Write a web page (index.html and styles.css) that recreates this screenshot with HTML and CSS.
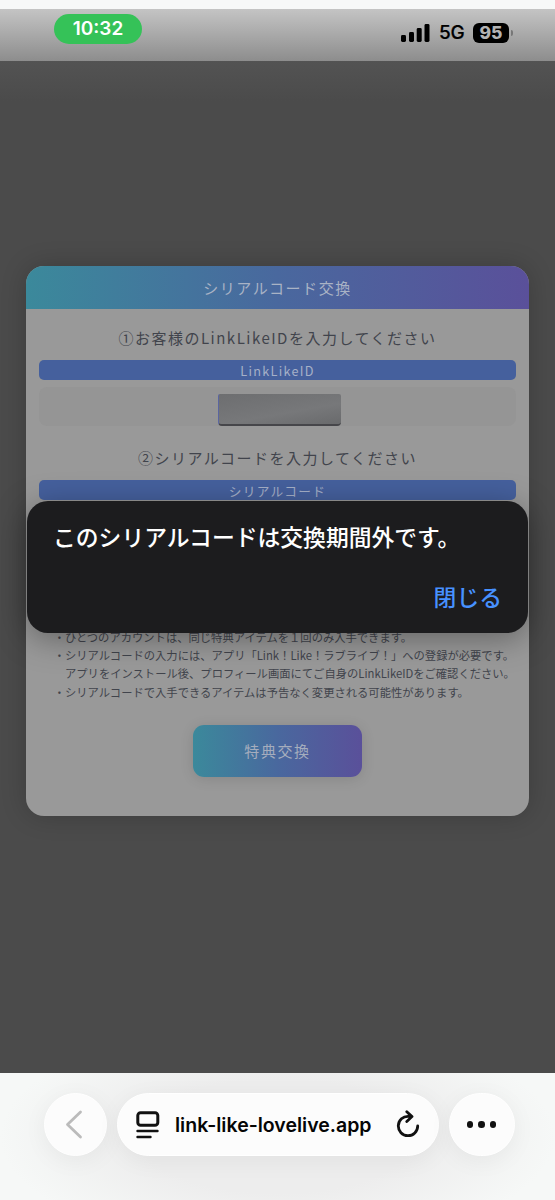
FILE: index.html
```html
<!DOCTYPE html>
<html lang="ja">
<head>
<meta charset="utf-8">
<title>シリアルコード交換</title>
<link rel="stylesheet" href="styles.css">
</head>
<body>
<div class="phone">
  <header class="status">
    <span class="clock">10:32</span>
    <div class="indicators">
      <svg class="signal" width="29" height="18" viewBox="0 0 29 18"><rect x="0" y="11" width="5" height="7" rx="1.4"/><rect x="8" y="8" width="5" height="10" rx="1.4"/><rect x="15.700" y="4" width="5" height="14" rx="1.4"/><rect x="23.500" y="0" width="5" height="18" rx="1.4"/></svg>
      <span class="network">5G</span>
      <span class="battery">95</span>
      <span class="battery-tip"></span>
    </div>
  </header>
  <main class="page">
    <section class="card">
      <h1 class="card-title"><span>シリアルコード交換</span></h1>
      <div class="card-body">
        <h2 class="step"><span class="step-one">①お客様のLinkLikeIDを入力してください</span></h2>
        <div class="label"><span class="label-id">LinkLikeID</span></div>
        <div class="field"><span class="masked"></span></div>
        <h2 class="step step-second"><span>②シリアルコードを入力してください</span></h2>
        <div class="label"><span>シリアルコード</span></div>
        <div class="field"></div>
        <ul class="notes">
          <li>ひとつのアカウントは、同じ特典アイテムを１回のみ入手できます。</li>
          <li>シリアルコードの入力には、アプリ「Link！Like！ラブライブ！」への登録が必要です。<br>アプリをインストール後、プロフィール画面にてご自身のLinkLikeIDをご確認ください。</li>
          <li>シリアルコードで入手できるアイテムは予告なく変更される可能性があります。</li>
        </ul>
        <button class="submit">特典交換</button>
      </div>
    </section>
    <div class="dialog">
      <p class="message">このシリアルコードは交換期間外です。</p>
      <button class="close">閉じる</button>
    </div>
  </main>
  <footer class="toolbar">
    <div class="back"><svg width="18" height="29" viewBox="0 0 18 29"><path d="M15.500 2 2.500 14.500 15.500 27"/></svg></div>
    <div class="address">
      <svg class="reader" width="24" height="28" viewBox="0 0 24 28"><rect x="1.800" y="1.800" width="20" height="12.400" rx="2.800" stroke-width="3"/><path d="M1.500 20H21.500M1.500 26H14.500" stroke-width="2.400"/></svg>
      <span class="domain">link-like-lovelive.app</span>
      <svg class="reload" width="24" height="29" viewBox="0 0 24 29"><path d="M12.500 6.300A9.700 9.700 0 1 0 21.700 16M10.800 1.800 16 6.600 10.800 11.500"/></svg>
    </div>
    <div class="more"><i></i><i></i><i></i></div>
  </footer>
</div>
</body>
</html>
```
FILE: styles.css
```css
* { box-sizing: border-box; margin: 0; padding: 0; }
body { background: #f7f8f8; font-family: "Noto Sans CJK JP", sans-serif; }
button { border: 0; font-family: inherit; }
.phone { width: 555px; height: 1200px; padding-top: 9px; display: flex; flex-direction: column; overflow: hidden; }

.status { height: 52px; flex: none; display: flex; justify-content: space-between; align-items: flex-start; padding: 5px 42px 0 54px; background: linear-gradient(#c4c4c4, #8d8d8d); font-family: Inter, sans-serif; }
.clock { width: 88px; height: 30px; border-radius: 15px; background: #35c258; color: #fff; font-size: 19px; font-weight: 600; line-height: 30px; text-align: center; }
.indicators { display: flex; align-items: center; height: 20px; margin-top: 9px; }
.signal { fill: #000; }
.network { width: 26px; margin-left: 9px; font-size: 19px; font-weight: 500; line-height: 20px; letter-spacing: -.3px; white-space: nowrap; -webkit-text-stroke: .2px #000; }
.battery { width: 36px; height: 20px; margin-left: 8px; border-radius: 6px; background: #000; color: #b3b3b3; font-size: 17.500px; font-weight: 800; line-height: 20px; text-align: center; }
.battery-tip { width: 2px; height: 6px; margin-left: 2px; border-radius: 0 2px 2px 0; background: #777; }

.page { position: relative; height: 1012px; flex: none; padding: 205px 26px 0; background: linear-gradient(#535353, #4b4b4b 40px); }
.card { height: 550px; border-radius: 18px; overflow: hidden; background: #999; box-shadow: 0 0 26px rgba(0,0,0,.2); color: #41444c; }
.card-title { height: 43px; background: linear-gradient(90deg, #3b899b, #49689e 50%, #5a509a); color: #a9b3c5; text-align: center; font-size: 15px; font-weight: 400; line-height: 43px; letter-spacing: 1.550px; }
.card-body { padding: 19px 13px 0; display: flex; flex-direction: column; }
.step { height: 20px; font-size: 15px; font-weight: 400; line-height: 20px; letter-spacing: 1.500px; text-align: center; }
.label { height: 20px; margin-top: 12px; border-radius: 5px; background: #45609d; color: #a5b0c8; font-size: 12.700px; line-height: 21px; letter-spacing: 1.270px; text-align: center; }
.field { height: 39px; margin-top: 7px; padding-top: 7px; border-radius: 8px; background: #959595; display: flex; justify-content: center; align-items: flex-start; }
.masked { width: 123px; height: 32px; margin-left: 4px; border-radius: 2px 2px 4px 4px; background: linear-gradient(170deg, #6d6e70, #77787a 60%, #696a6c); border-bottom: 2px solid #46464a; border-left: 1px solid #5a65a0; }
.step-second { margin-top: 22px; }
.notes { list-style: none; margin-top: 82px; padding-left: 26px; font-size: 11.300px; line-height: 18.200px; white-space: nowrap; }
.notes li::before { content: "・"; margin-left: -11.300px; }
.submit { align-self: center; width: 169px; height: 52px; margin-top: 24px; border-radius: 11px; background: linear-gradient(90deg, #3b899b, #49689e 50%, #5a509a); box-shadow: 0 2px 14px rgba(0,0,0,.12); color: #a5adbd; font-size: 15px; letter-spacing: 1.600px; }

.dialog { position: absolute; left: 27px; top: 440px; width: 501px; height: 132px; padding: 20px 26px; border-radius: 21px; background: #1c1c1e; box-shadow: 0 6px 32px rgba(0,0,0,.35); display: flex; flex-direction: column; justify-content: space-between; }
.message { color: #fff; font-size: 22.800px; font-weight: 500; line-height: 32px; white-space: nowrap; }
.close { align-self: flex-end; background: none; color: #4791ff; font-size: 22.800px; font-weight: 500; line-height: 32px; }

.toolbar { flex: 1; display: flex; gap: 10px; padding: 20px 40px 0 43.500px; background: radial-gradient(ellipse 50% 90% at 50% 50%, #ededed 50%, #f6f8f7 100%); }
.toolbar svg { fill: none; stroke: #111; stroke-linecap: round; stroke-linejoin: round; }
.back, .address, .more { height: 63px; border-radius: 32px; background: #fcfcfc; border: 1px solid #fff; box-shadow: 0 5px 24px rgba(0,0,0,.05); display: flex; align-items: center; }
.back { width: 63px; padding-left: 20px; }
.toolbar .back svg { stroke: #bbb; stroke-width: 2.800; }
.address { width: 322px; padding: 0 18px; justify-content: space-between; }
.domain { width: 205px; color: #050505; font-family: Inter, sans-serif; font-size: 19.500px; font-weight: 600; letter-spacing: 0; white-space: nowrap; }
.reload { stroke-width: 2.800; }
.more { width: 66px; justify-content: center; gap: 5px; }
.more i { width: 6.500px; height: 6.500px; border-radius: 50%; background: #111; }
```
